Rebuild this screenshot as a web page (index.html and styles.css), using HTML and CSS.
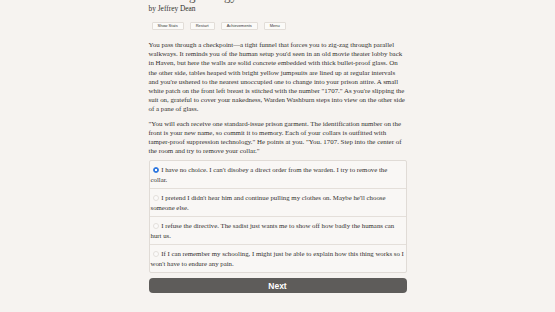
FILE: index.html
```html
<!DOCTYPE html>
<html lang="en">
<head>
  <meta charset="UTF-8" />
  <title>Fleshbag Trilogy</title>
  <link rel="stylesheet" href="styles.css">
</head>
<body>
  <div class="container">
    <h1 class="title">Fleshbag Trilogy</h1>
    <p class="author">by Jeffrey Dean</p>
    <div class="buttons">
      <button>Show Stats</button>
      <button>Restart</button>
      <button>Achievements</button>
      <button>Menu</button>
    </div>

    <div class="text">
      <p>You pass through a checkpoint—a tight funnel that forces you to zig-zag through parallel walkways. It reminds you of the human setup you'd seen in an old movie theater lobby back in Haven, but here the walls are solid concrete embedded with thick bullet-proof glass. On the other side, tables heaped with bright yellow jumpsuits are lined up at regular intervals and you're ushered to the nearest unoccupied one to change into your prison attire. A small white patch on the front left breast is stitched with the number "1707." As you're slipping the suit on, grateful to cover your nakedness, Warden Washburn steps into view on the other side of a pane of glass.</p>
      <p>"You will each receive one standard-issue prison garment. The identification number on the front is your new name, so commit it to memory. Each of your collars is outfitted with tamper-proof suppression technology." He points at you. "You. 1707. Step into the center of the room and try to remove your collar."</p>
    </div>

    <form class="choices">
      <label class="choice"><input type="radio" name="choice" checked> I have no choice. I can't disobey a direct order from the warden. I try to remove the collar.</label>
      <label class="choice"><input type="radio" name="choice"> I pretend I didn't hear him and continue pulling my clothes on. Maybe he'll choose someone else.</label>
      <label class="choice"><input type="radio" name="choice"> I refuse the directive. The sadist just wants me to show off how badly the humans can hurt us.</label>
      <label class="choice"><input type="radio" name="choice"> If I can remember my schooling, I might just be able to explain how this thing works so I won't have to endure any pain.</label>
    </form>
    <button class="next">Next</button>
  </div>
</body>
</html>
```

FILE: styles.css
```css
body {
  margin: 0;
  background-color: #f6f3f0;
  color: #33312f;
  font-family: "Liberation Serif", Georgia, serif;
  overflow: hidden;
}

.container {
  width: 258px;
  margin: 0 auto;
}

.title {
  font-size: 13px;
  line-height: 14px;
  margin: -11px 0 0 0;
  font-weight: normal;
  color: #55524f;
}

.author {
  font-size: 7.4px;
  line-height: 9px;
  margin: 1px 0 9px 0;
}

.buttons {
  display: flex;
  gap: 6px;
  margin-left: 3px;
  margin-bottom: 10px;
}

.buttons button {
  font-family: "Liberation Sans", Arial, sans-serif;
  font-size: 4px;
  line-height: 6px;
  padding: 0 5px;
  background: #fbfaf8;
  border: 1px solid #e2ddd8;
  border-radius: 1px;
  color: #333;
}

.text p {
  font-size: 6.9px;
  line-height: 9.2px;
  margin: 0 0 5px 0;
}

.choices {
  margin-top: 4px;
  border: 1px solid #e0dbd6;
  border-radius: 2px;
  background: #f9f7f5;
}

.choice {
  display: block;
  font-size: 6.8px;
  line-height: 10px;
  padding: 4px 0 3px 1px;
  border-top: 1px solid #e4dfda;
}

.choice:first-child {
  border-top: none;
}

.choice input {
  appearance: none;
  width: 6px;
  height: 6px;
  margin: 0 1px 0 2px;
  border: 1px solid #e3dfdb;
  border-radius: 50%;
  background: #fbfaf9;
  vertical-align: -1px;
}

.choice input:checked {
  border-color: #2f78e0;
  background: radial-gradient(circle, #ffffff 0 0.9px, #2f78e0 1.3px);
}

.next {
  display: block;
  width: 100%;
  margin-top: 5px;
  height: 15px;
  background: #5e5c5a;
  color: #fff;
  border: none;
  border-radius: 4px;
  font-family: "Liberation Sans", Arial, sans-serif;
  font-weight: bold;
  font-size: 8.5px;
}
```
